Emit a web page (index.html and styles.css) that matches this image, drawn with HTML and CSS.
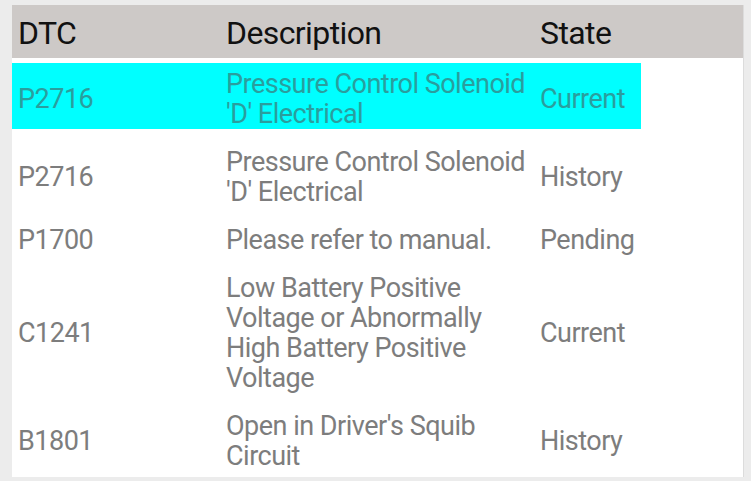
FILE: index.html
```html
<!DOCTYPE html>
<html>
<head>
<meta charset="utf-8">
<link rel="stylesheet" href="styles.css">
</head>
<body>
<div class="frame">
  <div class="panel">
    <div class="header">
      <div class="cell c1">DTC</div>
      <div class="cell c2">Description</div>
      <div class="cell c3">State</div>
    </div>
    <div class="rows">
      <div class="row selected">
        <div class="cell c1">P2716</div>
        <div class="cell c2">Pressure Control Solenoid 'D' Electrical</div>
        <div class="cell c3">Current</div>
      </div>
      <div class="row">
        <div class="cell c1">P2716</div>
        <div class="cell c2">Pressure Control Solenoid 'D' Electrical</div>
        <div class="cell c3">History</div>
      </div>
      <div class="row">
        <div class="cell c1">P1700</div>
        <div class="cell c2">Please refer to manual.</div>
        <div class="cell c3">Pending</div>
      </div>
      <div class="row">
        <div class="cell c1">C1241</div>
        <div class="cell c2">Low Battery Positive Voltage or Abnormally High Battery Positive Voltage</div>
        <div class="cell c3">Current</div>
      </div>
      <div class="row">
        <div class="cell c1">B1801</div>
        <div class="cell c2">Open in Driver's Squib Circuit</div>
        <div class="cell c3">History</div>
      </div>
    </div>
  </div>
</div>
</body>
</html>
```

FILE: styles.css
```css
html, body {
  margin: 0;
  padding: 0;
  background: #ececec;
  width: 751px;
  height: 481px;
  overflow: hidden;
}
.frame {
  padding: 5px 7px 0 12px;
  height: 476px;
  border-bottom: 4px solid #c4c4c4;
}
.panel {
  background: #ffffff;
  height: 472px;
  overflow: hidden;
  border-right: 1px solid #dcdcdc;
  font-family: Roboto, "Liberation Sans", sans-serif;
}
.header {
  display: grid;
  grid-template-columns: 209px 314px 106px;
  align-items: center;
  height: 53px;
  padding-top: 3px;
  box-sizing: border-box;
  background: #cdc9c7;
  color: #111111;
  font-size: 32px;
  letter-spacing: -0.6px;
}
.rows {
  margin-top: 5px;
  width: 629px;
}
.row {
  display: grid;
  grid-template-columns: 209px 314px 106px;
  align-items: center;
  padding-top: 6px;
  margin-bottom: 12px;
  color: #7d7d7d;
  font-size: 27px;
  line-height: 30px;
  letter-spacing: -0.5px;
}
.row.selected {
  background: #00ffff;
  color: #2a9e9e;
}
.cell {
  padding-left: 5px;
}
.c1 {
  padding-left: 6px;
}
```
